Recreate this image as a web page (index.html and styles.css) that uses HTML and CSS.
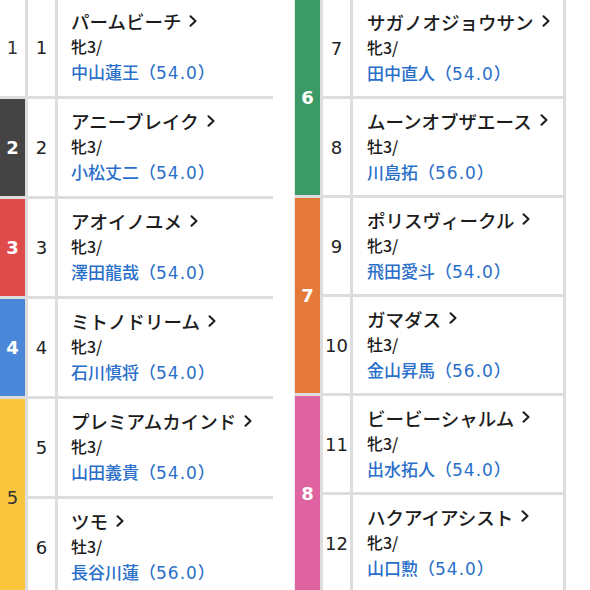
FILE: index.html
```html
<!DOCTYPE html>
<html lang="ja">
<head>
<meta charset="utf-8">
<title>出馬表</title>
<link rel="stylesheet" href="styles.css">
</head>
<body>
<div class="page">
  <div class="table left">
    <div class="frame f1">1</div>
    <div class="num">1</div>
    <div class="info"><div class="name">パームビーチ<svg class="chev" viewBox="0 0 8 12" width="8" height="12"><path d="M1.5 1.2 L6.5 6 L1.5 10.8"/></svg></div><div class="sex">牝3/</div><div class="jockey">中山蓮王（<span class="wt">54.0</span>）</div></div>

    <div class="frame f2">2</div>
    <div class="num">2</div>
    <div class="info"><div class="name">アニーブレイク<svg class="chev" viewBox="0 0 8 12" width="8" height="12"><path d="M1.5 1.2 L6.5 6 L1.5 10.8"/></svg></div><div class="sex">牝3/</div><div class="jockey">小松丈二（<span class="wt">54.0</span>）</div></div>

    <div class="frame f3">3</div>
    <div class="num">3</div>
    <div class="info"><div class="name">アオイノユメ<svg class="chev" viewBox="0 0 8 12" width="8" height="12"><path d="M1.5 1.2 L6.5 6 L1.5 10.8"/></svg></div><div class="sex">牝3/</div><div class="jockey">澤田龍哉（<span class="wt">54.0</span>）</div></div>

    <div class="frame f4">4</div>
    <div class="num">4</div>
    <div class="info"><div class="name">ミトノドリーム<svg class="chev" viewBox="0 0 8 12" width="8" height="12"><path d="M1.5 1.2 L6.5 6 L1.5 10.8"/></svg></div><div class="sex">牝3/</div><div class="jockey">石川慎将（<span class="wt">54.0</span>）</div></div>

    <div class="frame f5 span2">5</div>
    <div class="num">5</div>
    <div class="info"><div class="name">プレミアムカインド<svg class="chev" viewBox="0 0 8 12" width="8" height="12"><path d="M1.5 1.2 L6.5 6 L1.5 10.8"/></svg></div><div class="sex">牝3/</div><div class="jockey">山田義貴（<span class="wt">54.0</span>）</div></div>

    <div class="num">6</div>
    <div class="info"><div class="name">ツモ<svg class="chev" viewBox="0 0 8 12" width="8" height="12"><path d="M1.5 1.2 L6.5 6 L1.5 10.8"/></svg></div><div class="sex">牡3/</div><div class="jockey">長谷川蓮（<span class="wt">56.0</span>）</div></div>
  </div>

  <div class="table right">
    <div class="frame f6 span2">6</div>
    <div class="num">7</div>
    <div class="info"><div class="name">サガノオジョウサン<svg class="chev" viewBox="0 0 8 12" width="8" height="12"><path d="M1.5 1.2 L6.5 6 L1.5 10.8"/></svg></div><div class="sex">牝3/</div><div class="jockey">田中直人（<span class="wt">54.0</span>）</div></div>

    <div class="num">8</div>
    <div class="info"><div class="name">ムーンオブザエース<svg class="chev" viewBox="0 0 8 12" width="8" height="12"><path d="M1.5 1.2 L6.5 6 L1.5 10.8"/></svg></div><div class="sex">牡3/</div><div class="jockey">川島拓（<span class="wt">56.0</span>）</div></div>

    <div class="frame f7 span2">7</div>
    <div class="num">9</div>
    <div class="info"><div class="name">ポリスヴィークル<svg class="chev" viewBox="0 0 8 12" width="8" height="12"><path d="M1.5 1.2 L6.5 6 L1.5 10.8"/></svg></div><div class="sex">牝3/</div><div class="jockey">飛田愛斗（<span class="wt">54.0</span>）</div></div>

    <div class="num">10</div>
    <div class="info"><div class="name">ガマダス<svg class="chev" viewBox="0 0 8 12" width="8" height="12"><path d="M1.5 1.2 L6.5 6 L1.5 10.8"/></svg></div><div class="sex">牡3/</div><div class="jockey">金山昇馬（<span class="wt">56.0</span>）</div></div>

    <div class="frame f8 span2">8</div>
    <div class="num">11</div>
    <div class="info"><div class="name">ビービーシャルム<svg class="chev" viewBox="0 0 8 12" width="8" height="12"><path d="M1.5 1.2 L6.5 6 L1.5 10.8"/></svg></div><div class="sex">牝3/</div><div class="jockey">出水拓人（<span class="wt">54.0</span>）</div></div>

    <div class="num">12</div>
    <div class="info"><div class="name">ハクアイアシスト<svg class="chev" viewBox="0 0 8 12" width="8" height="12"><path d="M1.5 1.2 L6.5 6 L1.5 10.8"/></svg></div><div class="sex">牝3/</div><div class="jockey">山口勲（<span class="wt">54.0</span>）</div></div>
  </div>
</div>
</body>
</html>
```

FILE: styles.css
```css
html, body {
  margin: 0;
  padding: 0;
  overflow: hidden;
  background: #ffffff;
}

body {
  font-family: "Noto Sans CJK JP", "Noto Sans", "Liberation Sans", sans-serif;
  color: #1c1c1c;
}

.page {
  display: flex;
  align-items: flex-start;
  gap: 21px;
}

.table {
  display: grid;
  background: #dddddd;
  column-gap: 3px;
  row-gap: 3px;
}

.table.left {
  width: 273px;
  grid-template-columns: 25px 27px 1fr;
  grid-auto-rows: 97px;
  margin-top: -1px;
}

.table.right {
  width: 268px;
  grid-template-columns: 25px 27px 1fr;
  grid-auto-rows: 96px;
  border-left: 1px solid #e9e9e9;
  padding-right: 3px;
}

.frame {
  grid-column: 1;
  display: flex;
  align-items: center;
  justify-content: center;
  font-family: "DejaVu Sans", "Noto Sans", sans-serif;
  font-size: 18px;
  font-weight: 700;
  color: #ffffff;
  background: #ffffff;
}

.frame.span2 {
  grid-row: span 2;
}

.f1 { background: #ffffff; color: #333333; font-weight: 400; }
.f2 { background: #444444; }
.f3 { background: #df4a4b; }
.f4 { background: #4a87d9; }
.f5 { background: #f8c53c; color: #333333; font-weight: 400; }
.f6 { background: #3c9a67; }
.f7 { background: #e4793a; }
.f8 { background: #de63a0; }

.num {
  grid-column: 2;
  display: flex;
  align-items: center;
  justify-content: center;
  background: #ffffff;
  font-family: "DejaVu Sans", "Noto Sans", sans-serif;
  font-size: 18px;
  color: #222222;
}

.info {
  grid-column: 3;
  background: #ffffff;
  display: flex;
  flex-direction: column;
  justify-content: center;
  padding-left: 13px;
  white-space: nowrap;
  overflow: hidden;
  font-weight: 500;
}

.right .info {
  padding-left: 14px;
}

.name {
  font-size: 18.5px;
  line-height: 25px;
  color: #1c1c1c;
  display: flex;
  align-items: center;
}

.chev {
  margin-left: 8px;
  margin-top: -2px;
  flex: none;
}

.chev path {
  fill: none;
  stroke: #1c1c1c;
  stroke-width: 2;
  stroke-linecap: round;
  stroke-linejoin: round;
}

.sex {
  font-size: 16px;
  line-height: 25px;
  color: #1c1c1c;
}

.jockey {
  font-size: 17px;
  line-height: 25px;
  color: #2a6fc9;
}

.wt {
  font-family: "DejaVu Sans", "Noto Sans", sans-serif;
  font-weight: 400;
  letter-spacing: 1px;
}
```
